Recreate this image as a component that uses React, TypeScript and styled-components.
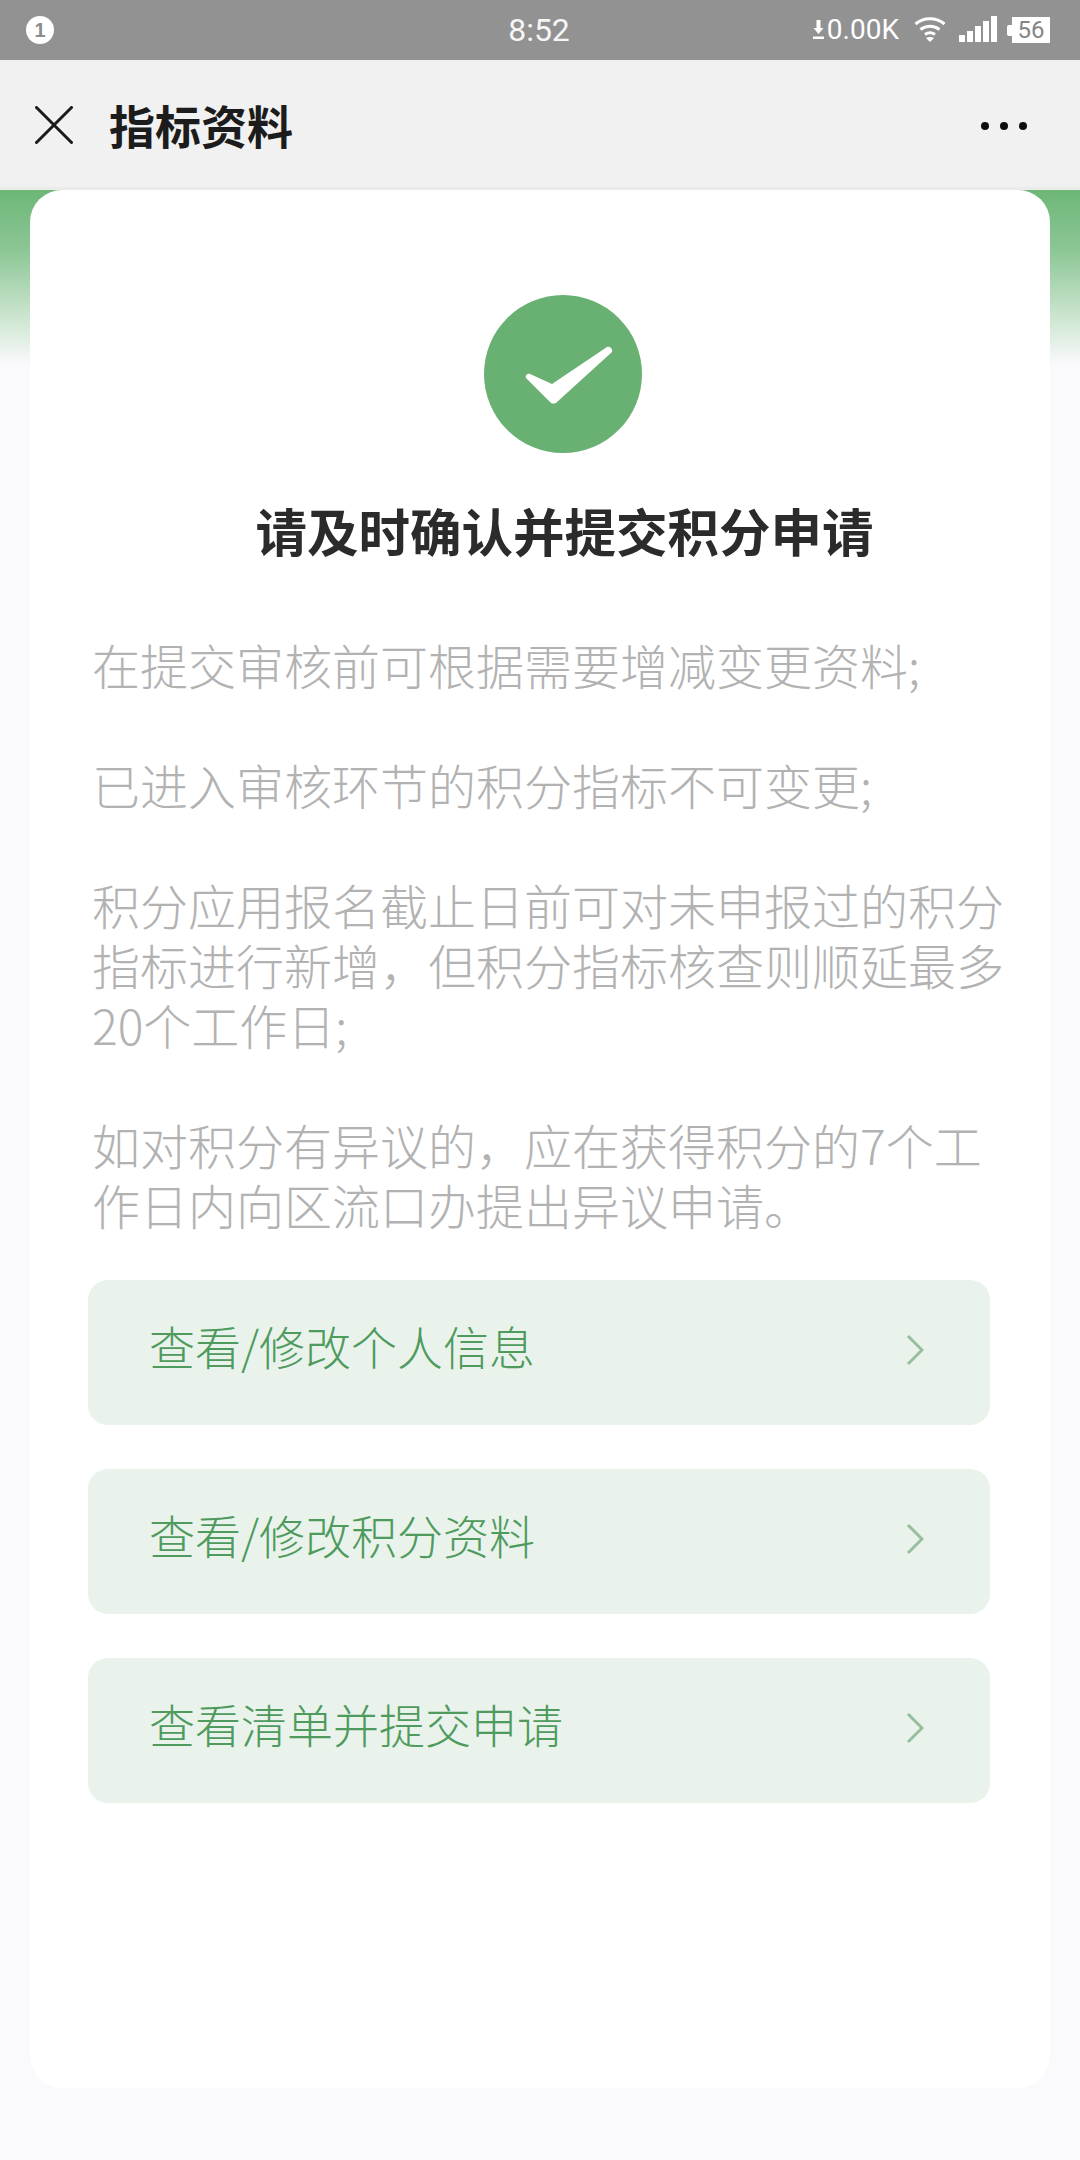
import React from 'react';
import styled, { createGlobalStyle } from 'styled-components';

const fontStack = `"Noto Sans CJK SC", "Noto Sans", sans-serif`;

const GlobalStyle = createGlobalStyle`
  html, body {
    margin: 0;
    padding: 0;
    background: #faf9fc;
  }
  * {
    box-sizing: border-box;
  }
`;

const Screen = styled.div`
  width: 1080px;
  height: 2160px;
  display: flex;
  flex-direction: column;
  overflow: hidden;
  background: #faf9fc;
  font-family: ${fontStack};
`;

const StatusBar = styled.div`
  height: 60px;
  flex: none;
  display: grid;
  grid-template-columns: 1fr auto 1fr;
  align-items: center;
  padding: 0 30px 0 26px;
  background: #929292;
  color: #fff;
`;

const NoticeBadge = styled.div`
  width: 28px;
  height: 28px;
  border-radius: 50%;
  background: #fff;
  color: #8c8c8c;
  font: 700 20px/28px 'Liberation Sans', sans-serif;
  text-align: center;
`;

const Clock = styled.div`
  margin-left: 2px;
  font: 400 32px/60px Roboto, sans-serif;
  color: #f6f6f6;
`;

const StatusIcons = styled.div`
  display: flex;
  align-items: center;
  justify-content: flex-end;
`;

const NetSpeed = styled.span`
  font: 400 28px/60px Roboto, sans-serif;
  margin: 0 15px 0 3px;
`;

const SignalIcon = styled.svg`
  margin-left: 13px;
`;

const Battery = styled.div`
  position: relative;
  width: 38px;
  height: 26px;
  margin-left: 14px;
  background: #fff;
  color: #858585;
  font: 400 24px/26px Roboto, sans-serif;
  text-align: center;
  &::before {
    content: '';
    position: absolute;
    left: -5px;
    top: 8px;
    width: 5px;
    height: 11px;
    background: #fff;
    border-radius: 2px 0 0 2px;
  }
`;

const NavBar = styled.div`
  height: 130px;
  flex: none;
  display: flex;
  align-items: center;
  padding: 0 53px 0 35px;
  background: #f1f1f1;
  border-bottom: 3px solid #ebebeb;
`;

const CloseIcon = styled.svg`
  margin-top: 3px;
`;

const NavTitle = styled.div`
  flex: 1;
  margin-left: 36px;
  font-size: 46px;
  line-height: 60px;
  font-weight: 700;
  color: #1c1c1c;
`;

const MoreDots = styled.div`
  display: flex;
  gap: 11px;
  margin-top: 5px;
`;

const Dot = styled.span`
  width: 8px;
  height: 8px;
  border-radius: 50%;
  background: #0d0d0d;
`;

const Body = styled.div`
  flex: 1;
  padding: 0 30px 72px;
  background: linear-gradient(
    to bottom,
    #6db777 0,
    #8cc695 60px,
    #d3e9d6 135px,
    #faf9fc 175px
  );
`;

const Card = styled.div`
  height: 100%;
  padding: 105px 60px 0 62px;
  display: flex;
  flex-direction: column;
  background: #fff;
  border-radius: 32px;
`;

const SuccessMark = styled.div`
  width: 158px;
  height: 158px;
  align-self: center;
  margin-left: 44px;
  display: flex;
  align-items: center;
  justify-content: center;
  border-radius: 50%;
  background: #69b173;
`;

const CheckIcon = styled.svg`
  margin: 2px 0 0 12px;
`;

const Heading = styled.h1`
  margin: 42px 0 0;
  padding-left: 47px;
  font-size: 51.5px;
  line-height: 70px;
  font-weight: 700;
  color: #2b2b2b;
  text-align: center;
  white-space: nowrap;
`;

const Notes = styled.div`
  margin-top: 69px;
  width: 925px;
`;

const Note = styled.p`
  margin: 0 0 60px;
  font-size: 48px;
  line-height: 60px;
  font-weight: 300;
  color: #b2b2b2;
`;

const Actions = styled.div`
  margin: -14px 0 0 -4px;
  width: 902px;
  display: flex;
  flex-direction: column;
  gap: 44px;
`;

const ActionRow = styled.div`
  height: 145px;
  padding: 0 66px 0 61px;
  display: flex;
  align-items: center;
  justify-content: space-between;
  border-radius: 20px;
  background: #e9f3ec;
`;

const ActionLabel = styled.span`
  margin-bottom: 16px;
  font-size: 46px;
  line-height: 60px;
  font-weight: 300;
  color: #4f9a5d;
`;

const ChevronIcon = styled.svg`
  margin-bottom: 6px;
`;

const notes = [
  '在提交审核前可根据需要增减变更资料;',
  '已进入审核环节的积分指标不可变更;',
  '积分应用报名截止日前可对未申报过的积分指标进行新增\uFF0C但积分指标核查则顺延最多20个工作日;',
  '如对积分有异议的\uFF0C应在获得积分的7个工作日内向区流口办提出异议申请。',
];

const actions = ['查看/修改个人信息', '查看/修改积分资料', '查看清单并提交申请'];

const App: React.FC = () => (
  <Screen>
    <GlobalStyle />
    <StatusBar>
      <NoticeBadge>1</NoticeBadge>
      <Clock>8:52</Clock>
      <StatusIcons>
        <svg width="11" height="24" viewBox="0 0 11 24" fill="#fff">
          <path d="M3.500 2h4v8h3l-5 6-5-6h3z" />
          <rect x="0" y="18.500" width="11" height="2.500" />
        </svg>
        <NetSpeed>0.00K</NetSpeed>
        <svg width="32" height="28" viewBox="0 0 32 28" fill="none" stroke="#fff" strokeWidth="3">
          <path d="M1.500 8C9.500 1 22.500 1 30.500 8" />
          <path d="M6.500 13.500C12 9 20 9 25.500 13.500" />
          <path d="M11 18.500C14 16.500 18 16.500 21 18.500" />
          <path d="M16 26l-4-4c2.500-1.500 5.500-1.500 8 0z" fill="#fff" stroke="none" />
        </svg>
        <SignalIcon width="39" height="28" viewBox="0 0 39 28" fill="#fff">
          <rect x="0" y="19" width="6" height="7" />
          <rect x="8" y="15" width="6" height="11" />
          <rect x="16" y="10" width="6" height="16" />
          <rect x="24" y="5" width="6" height="21" />
          <rect x="32" y="0" width="6" height="26" />
        </SignalIcon>
        <Battery>56</Battery>
      </StatusIcons>
    </StatusBar>
    <NavBar>
      <CloseIcon width="38" height="38" viewBox="0 0 38 38" fill="none" stroke="#1a1a1a" strokeWidth="3" strokeLinecap="round">
        <path d="M1.500 1.500l35 35M36.500 1.500l-35 35" />
      </CloseIcon>
      <NavTitle>指标资料</NavTitle>
      <MoreDots>
        <Dot />
        <Dot />
        <Dot />
      </MoreDots>
    </NavBar>
    <Body>
      <Card>
        <SuccessMark>
          <CheckIcon width="88" height="58" viewBox="0 0 88 58" fill="#fff">
            <path d="M1 32c-1-2 1-5 4-4l22 10L82 1c3-1 6 2 5 5L32 56c-2 2-5 2-7 0z" />
          </CheckIcon>
        </SuccessMark>
        <Heading>请及时确认并提交积分申请</Heading>
        <Notes>
          {notes.map((note) => (
            <Note key={note}>{note}</Note>
          ))}
        </Notes>
        <Actions>
          {actions.map((action) => (
            <ActionRow key={action}>
              <ActionLabel>{action}</ActionLabel>
              <ChevronIcon width="18" height="32" viewBox="0 0 18 32" fill="none" stroke="#97bf9f" strokeWidth="3">
                <path d="M2 2l14 14L2 30" />
              </ChevronIcon>
            </ActionRow>
          ))}
        </Actions>
      </Card>
    </Body>
  </Screen>
);

export default App;
